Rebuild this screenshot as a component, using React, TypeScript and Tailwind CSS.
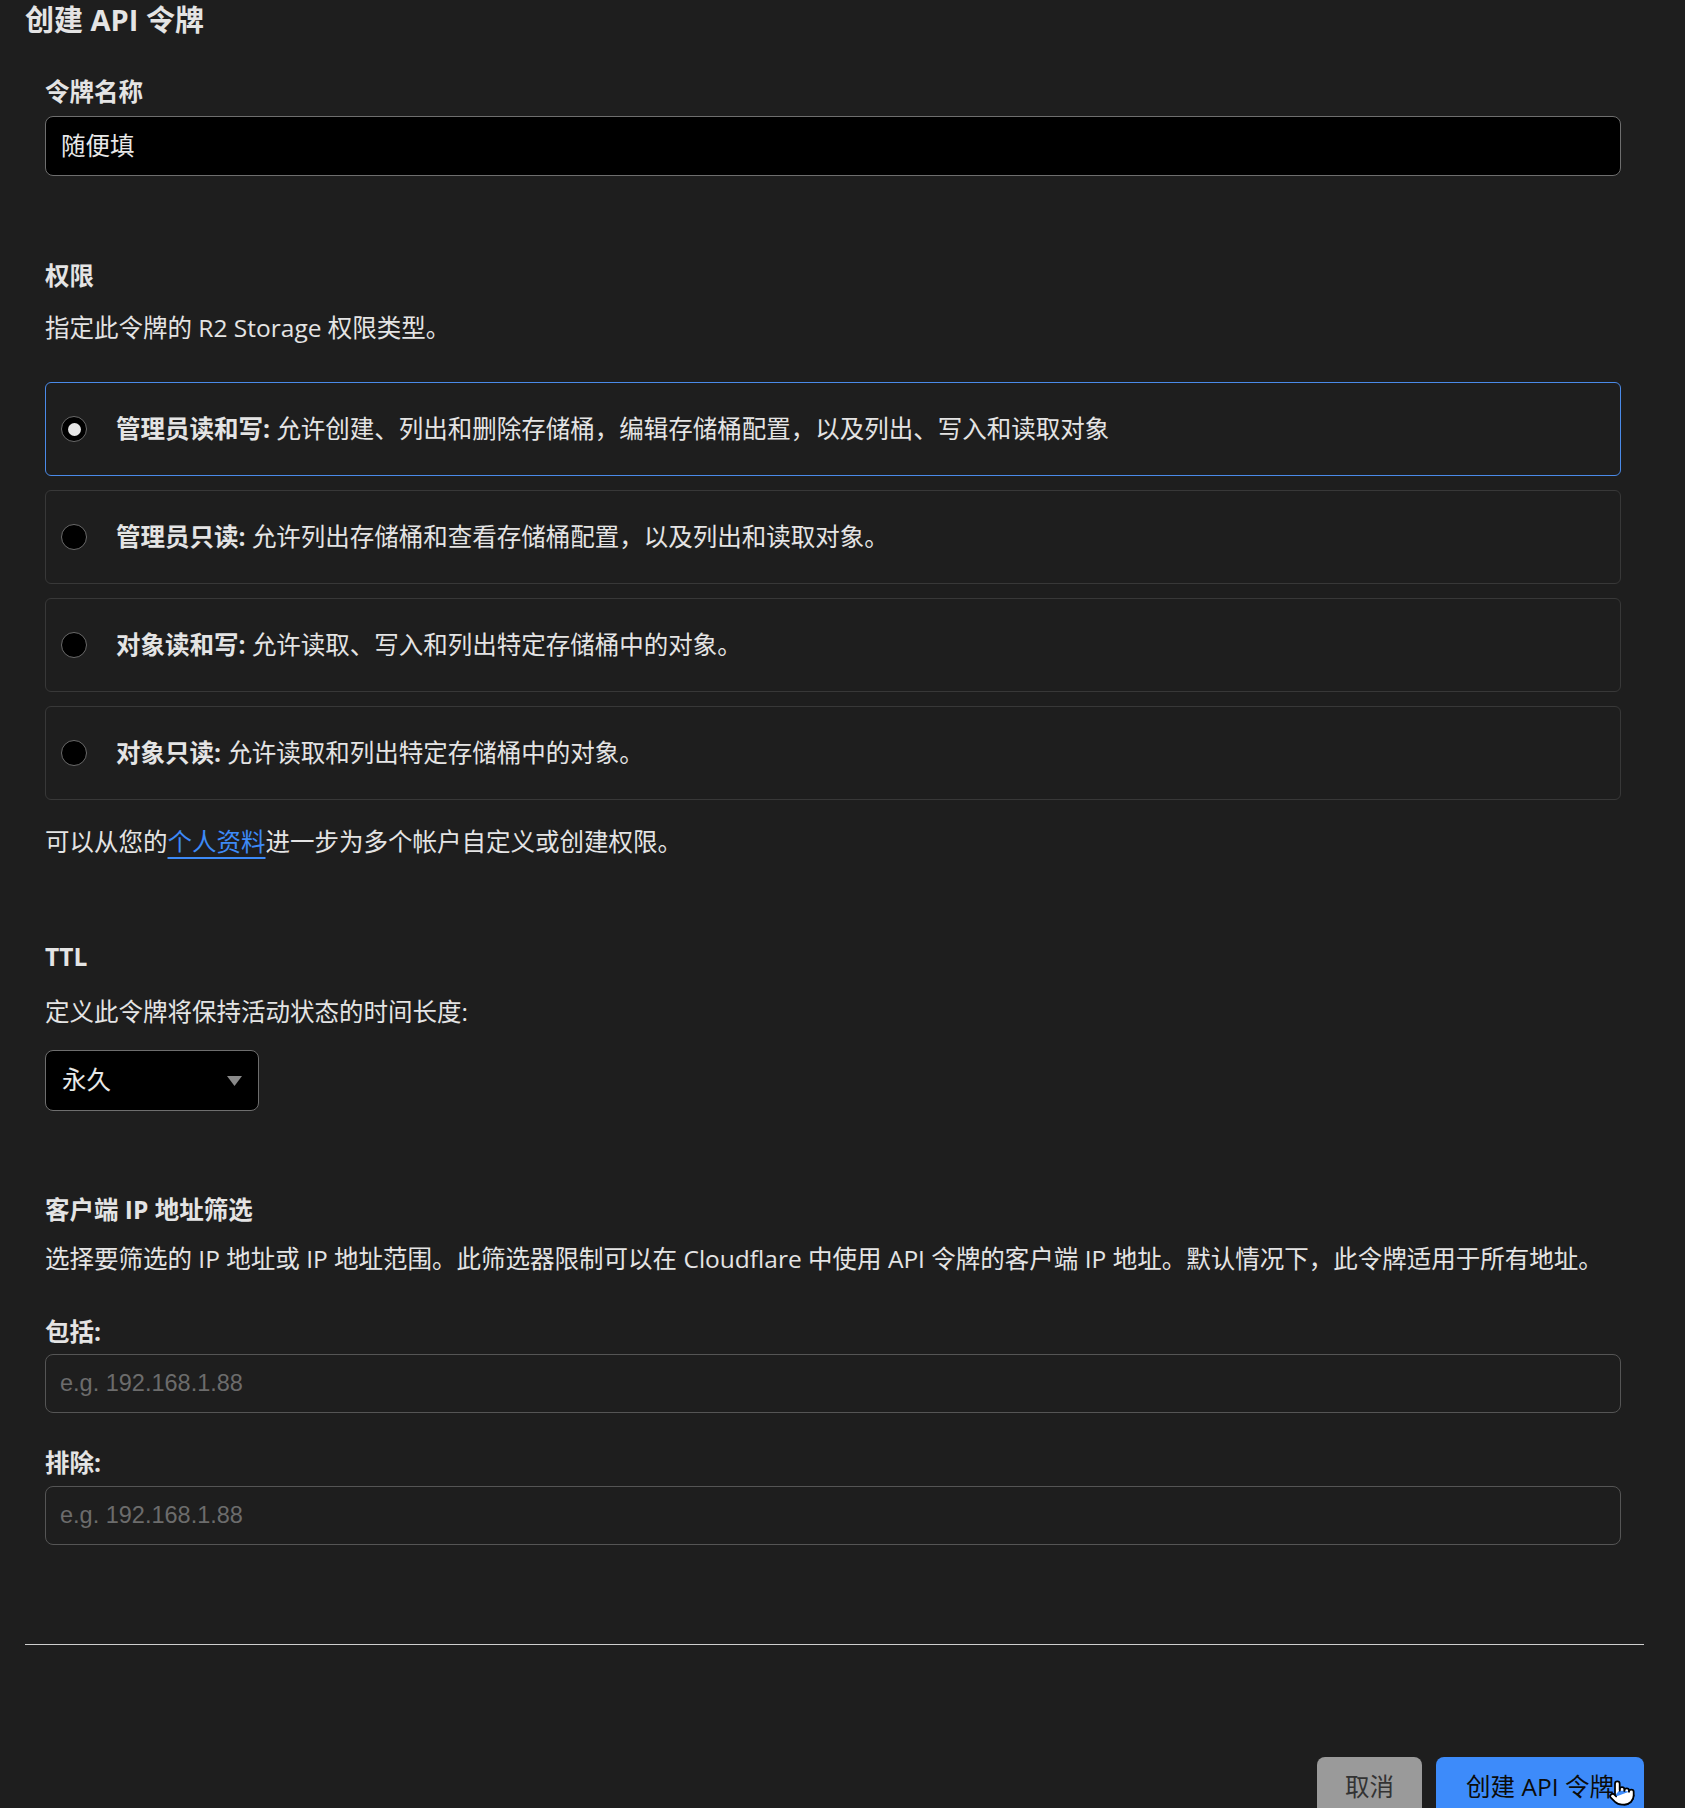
import { Pointer } from "lucide-react";

type PermissionOption = {
  title: string;
  text: string;
  selected?: boolean;
};

const OPTIONS: PermissionOption[] = [
  {
    title: "管理员读和写",
    text: "允许创建、列出和删除存储桶，编辑存储桶配置，以及列出、写入和读取对象",
    selected: true,
  },
  { title: "管理员只读", text: "允许列出存储桶和查看存储桶配置，以及列出和读取对象。" },
  { title: "对象读和写", text: "允许读取、写入和列出特定存储桶中的对象。" },
  { title: "对象只读", text: "允许读取和列出特定存储桶中的对象。" },
];

function RadioCard({ title, text, selected }: PermissionOption) {
  return (
    <div
      className={`flex h-[94px] items-center rounded-[6px] border pl-[15px] ${
        selected ? "border-[#4a8ae8]" : "border-[#383838]"
      }`}
    >
      <span className="flex size-[26px] shrink-0 items-center justify-center rounded-full border border-[#6a6a6a] bg-black">
        {selected ? <span className="size-[13px] rounded-full bg-[#e6e6e6]" /> : null}
      </span>
      <p className="ml-[29px] text-[24.5px] leading-[32px]">
        <span className="font-bold">{title}:</span> {text}
      </p>
    </div>
  );
}

export default function App() {
  return (
    <div className="min-h-screen w-full bg-[#1e1e1e] font-['Open_Sans','Noto_Sans_CJK_SC',sans-serif] text-[#e4e4e4]">
      <div className="ml-[25px] w-[1619px]">
        <h1 className="text-[29px] font-bold leading-[40px]">创建 API 令牌</h1>

        <div className="pl-[20px] pr-[23px]">
          {/* token name */}
          <p className="mt-[36px] text-[24.5px] font-bold leading-[32px]">令牌名称</p>
          <div className="mt-[8px] flex h-[60px] items-center rounded-[8px] border border-[#6e6e6e] bg-black px-[15px] text-[24.5px] text-[#e8e8e8]">
            随便填
          </div>

          {/* permissions */}
          <p className="mt-[84px] text-[24.5px] font-bold leading-[32px]">权限</p>
          <p className="mt-[20px] text-[24.5px] leading-[32px]">指定此令牌的 R2 Storage 权限类型。</p>

          <div className="mt-[38px] flex flex-col gap-[14px]">
            {OPTIONS.map((option) => (
              <RadioCard key={option.title} {...option} />
            ))}
          </div>

          <p className="mt-[26px] text-[24.5px] leading-[32px]">
            可以从您的
            <a className="text-[#3d8af7] underline decoration-[#3d8af7] decoration-2 underline-offset-[6px]">个人资料</a>
            进一步为多个帐户自定义或创建权限。
          </p>

          {/* TTL */}
          <p className="mt-[83px] text-[24.5px] font-bold leading-[32px]">TTL</p>
          <p className="mt-[23px] text-[24.5px] leading-[32px]">定义此令牌将保持活动状态的时间长度:</p>
          <div className="mt-[22px] flex h-[61px] w-[214px] items-center justify-between rounded-[8px] border border-[#6e6e6e] bg-black pl-[16px] pr-[16px] text-[24.5px] text-[#e8e8e8]">
            <span>永久</span>
            <svg width="15" height="10" viewBox="0 0 15 10">
              <polygon points="0,0 15,0 7.5,10" fill="#8a8a8a" />
            </svg>
          </div>

          {/* client IP filter */}
          <p className="mt-[83px] text-[24.5px] font-bold leading-[32px]">客户端 IP 地址筛选</p>
          <p className="mt-[17px] text-[24.5px] leading-[32px]">
            选择要筛选的 IP 地址或 IP 地址范围。此筛选器限制可以在 Cloudflare 中使用 API 令牌的客户端 IP 地址。默认情况下，此令牌适用于所有地址。
          </p>

          <p className="mt-[41px] text-[24.5px] font-bold leading-[32px]">包括:</p>
          <input
            placeholder="e.g. 192.168.1.88"
            className="mt-[6px] block h-[59px] w-full rounded-[8px] border border-[#555] bg-transparent px-[14px] font-['Liberation_Sans',Arial,sans-serif] text-[23.5px] text-[#e8e8e8] outline-none placeholder:text-[#6c6c6c]"
          />

          <p className="mt-[34px] text-[24.5px] font-bold leading-[32px]">排除:</p>
          <input
            placeholder="e.g. 192.168.1.88"
            className="mt-[7px] block h-[59px] w-full rounded-[8px] border border-[#555] bg-transparent px-[14px] font-['Liberation_Sans',Arial,sans-serif] text-[23.5px] text-[#e8e8e8] outline-none placeholder:text-[#6c6c6c]"
          />
        </div>

        <div className="mt-[99px] h-px w-full bg-[#cfcfcf]" />

        <div className="mt-[112px] flex justify-end gap-[14px]">
          <button
            type="button"
            className="flex h-[60px] w-[105px] items-center justify-center rounded-[8px] bg-[#9a9a9a] text-[24.5px] text-[#333]"
          >
            取消
          </button>
          <button
            type="button"
            className="relative flex h-[60px] w-[208px] items-center justify-center rounded-[8px] bg-[#3d8bfa] text-[24.5px] text-[#0b0b0b]"
          >
            创建 API 令牌
            <Pointer
              className="absolute left-[172px] top-[22px] size-[28px]"
              fill="#ffffff"
              stroke="#000000"
              strokeWidth={1.5}
            />
          </button>
        </div>
      </div>
    </div>
  );
}
